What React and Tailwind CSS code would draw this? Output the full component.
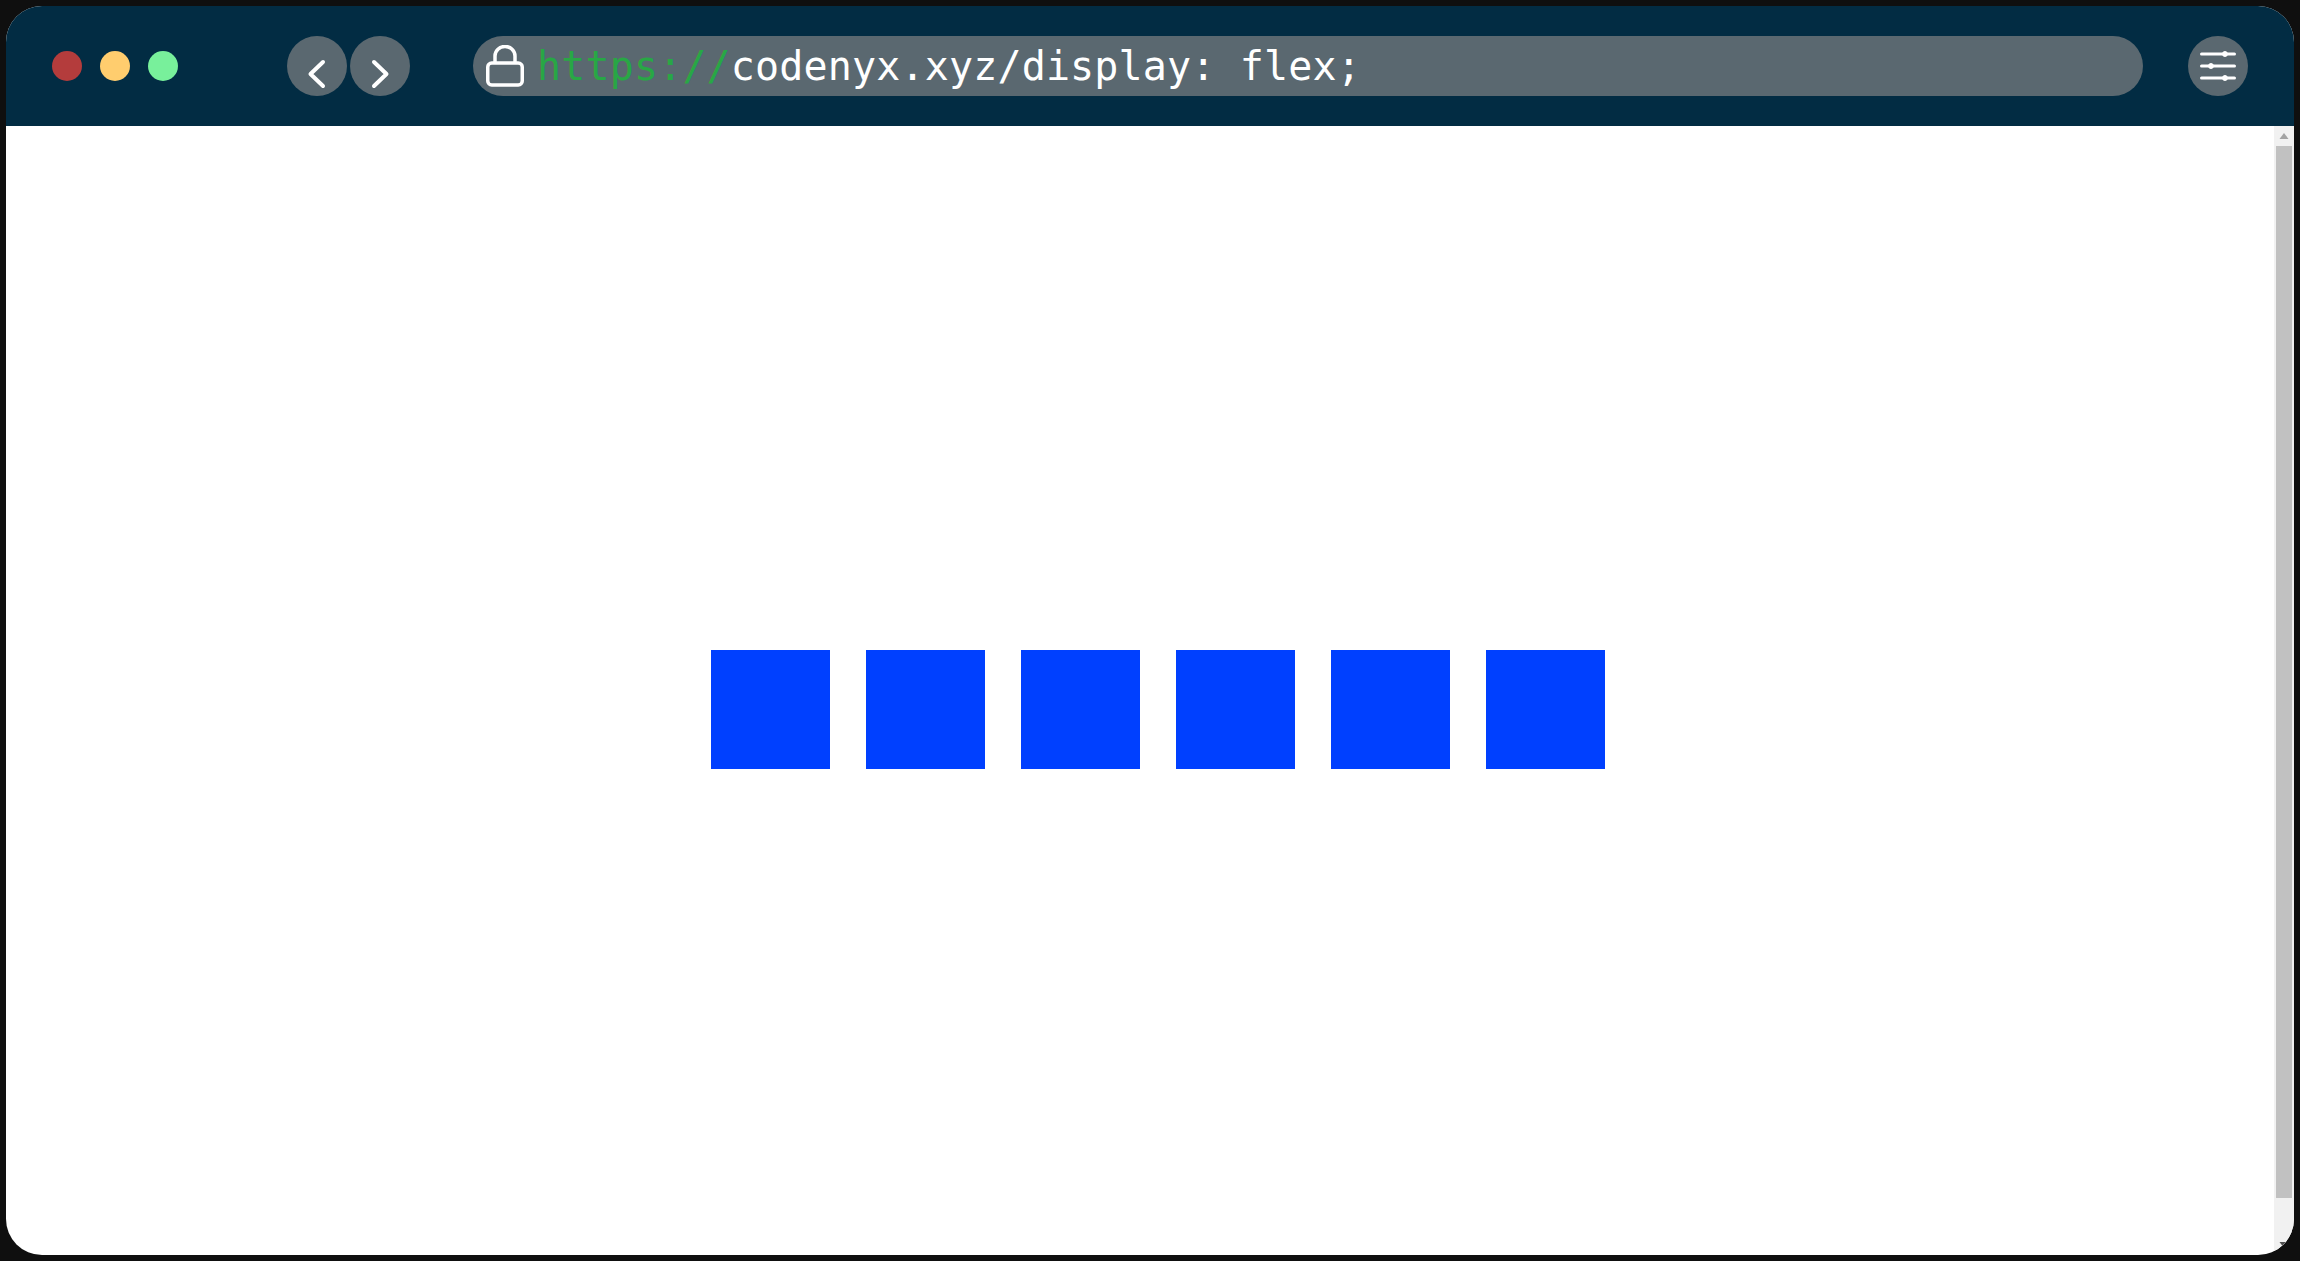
export default function App() {
  const circ = "w-[60px] h-[60px] rounded-full bg-[#5a6870] flex items-center justify-center shrink-0";
  return (
    <div className="w-[2300px] h-[1261px] bg-[#0f0f0f] p-[6px]">
      <div className="w-full h-full rounded-[36px] overflow-hidden bg-white flex flex-col">
        <header className="h-[120px] bg-[#022c43] flex items-center pl-[46px] pr-[46px] shrink-0">
          <div className="flex gap-[18px] w-[235px] shrink-0">
            <span className="w-[30px] h-[30px] rounded-full bg-[#b43c3c]" />
            <span className="w-[30px] h-[30px] rounded-full bg-[#ffcd6e]" />
            <span className="w-[30px] h-[30px] rounded-full bg-[#78f09b]" />
          </div>
          <div className="flex gap-[3px] shrink-0">
            <div className={circ}>
              <svg width="60" height="60" viewBox="0 0 60 60" fill="none" stroke="#fff" strokeWidth="4" strokeLinecap="round" strokeLinejoin="round">
                <path d="M36 26 L23.5 38 L36 50" />
              </svg>
            </div>
            <div className={circ}>
              <svg width="60" height="60" viewBox="0 0 60 60" fill="none" stroke="#fff" strokeWidth="4" strokeLinecap="round" strokeLinejoin="round">
                <path d="M24 26 L36.5 38 L24 50" />
              </svg>
            </div>
          </div>
          <div className="ml-[63px] w-[1670px] h-[60px] rounded-[30px] bg-[#5a6870] flex items-center shrink-0 pl-[13px]">
            <svg width="38" height="42" viewBox="0 0 38 42" fill="none" stroke="#fff" strokeWidth="3.5" className="shrink-0">
              <rect x="1.75" y="18" width="34.5" height="22" rx="4" />
              <path d="M9 18 V11 a10 9.5 0 0 1 20 0 V18" />
            </svg>
            <span className="ml-[13px] text-[40px] leading-[60px] tracking-[0.15px] whitespace-pre text-white font-['DejaVu_Sans_Mono',monospace]">
              <span className="text-[#28a745]">https://</span>codenyx.xyz/display: flex;
            </span>
          </div>
          <div className={circ + " ml-[45px]"}>
            <svg width="36" height="30" viewBox="0 0 36 30" fill="#fff" stroke="#fff" strokeWidth="3" strokeLinecap="round">
              <path d="M1.5 3 H34.5 M1.5 15 H34.5 M1.5 27 H34.5" />
              <circle cx="25" cy="3" r="2.5" strokeWidth="1" />
              <circle cx="11" cy="15" r="2.5" strokeWidth="1" />
              <circle cx="25" cy="27" r="2.5" strokeWidth="1" />
            </svg>
          </div>
        </header>
        <div className="flex-1 flex min-h-0">
          <main className="flex-1 flex items-start pl-[705px] pt-[524px]">
            <div className="flex gap-[36px]">
              {[0, 1, 2, 3, 4, 5].map((i) => (
                <div key={i} className="w-[119px] h-[119px] bg-[#0040ff]" />
              ))}
            </div>
          </main>
          <aside className="w-[20px] bg-[#f1f1f1] flex flex-col items-center shrink-0">
            <svg width="10" height="20" viewBox="0 0 10 20" className="shrink-0" fill="#a3a3a3">
              <path d="M5 7 L9.5 13 H0.5 Z" />
            </svg>
            <div className="w-[16px] h-[1052px] bg-[#c1c1c1] shrink-0" />
            <div className="flex-1" />
            <svg width="10" height="20" viewBox="0 0 10 20" className="shrink-0" fill="#505050">
              <path d="M0.5 7 H9.5 L5 13 Z" />
            </svg>
          </aside>
        </div>
      </div>
    </div>
  );
}
